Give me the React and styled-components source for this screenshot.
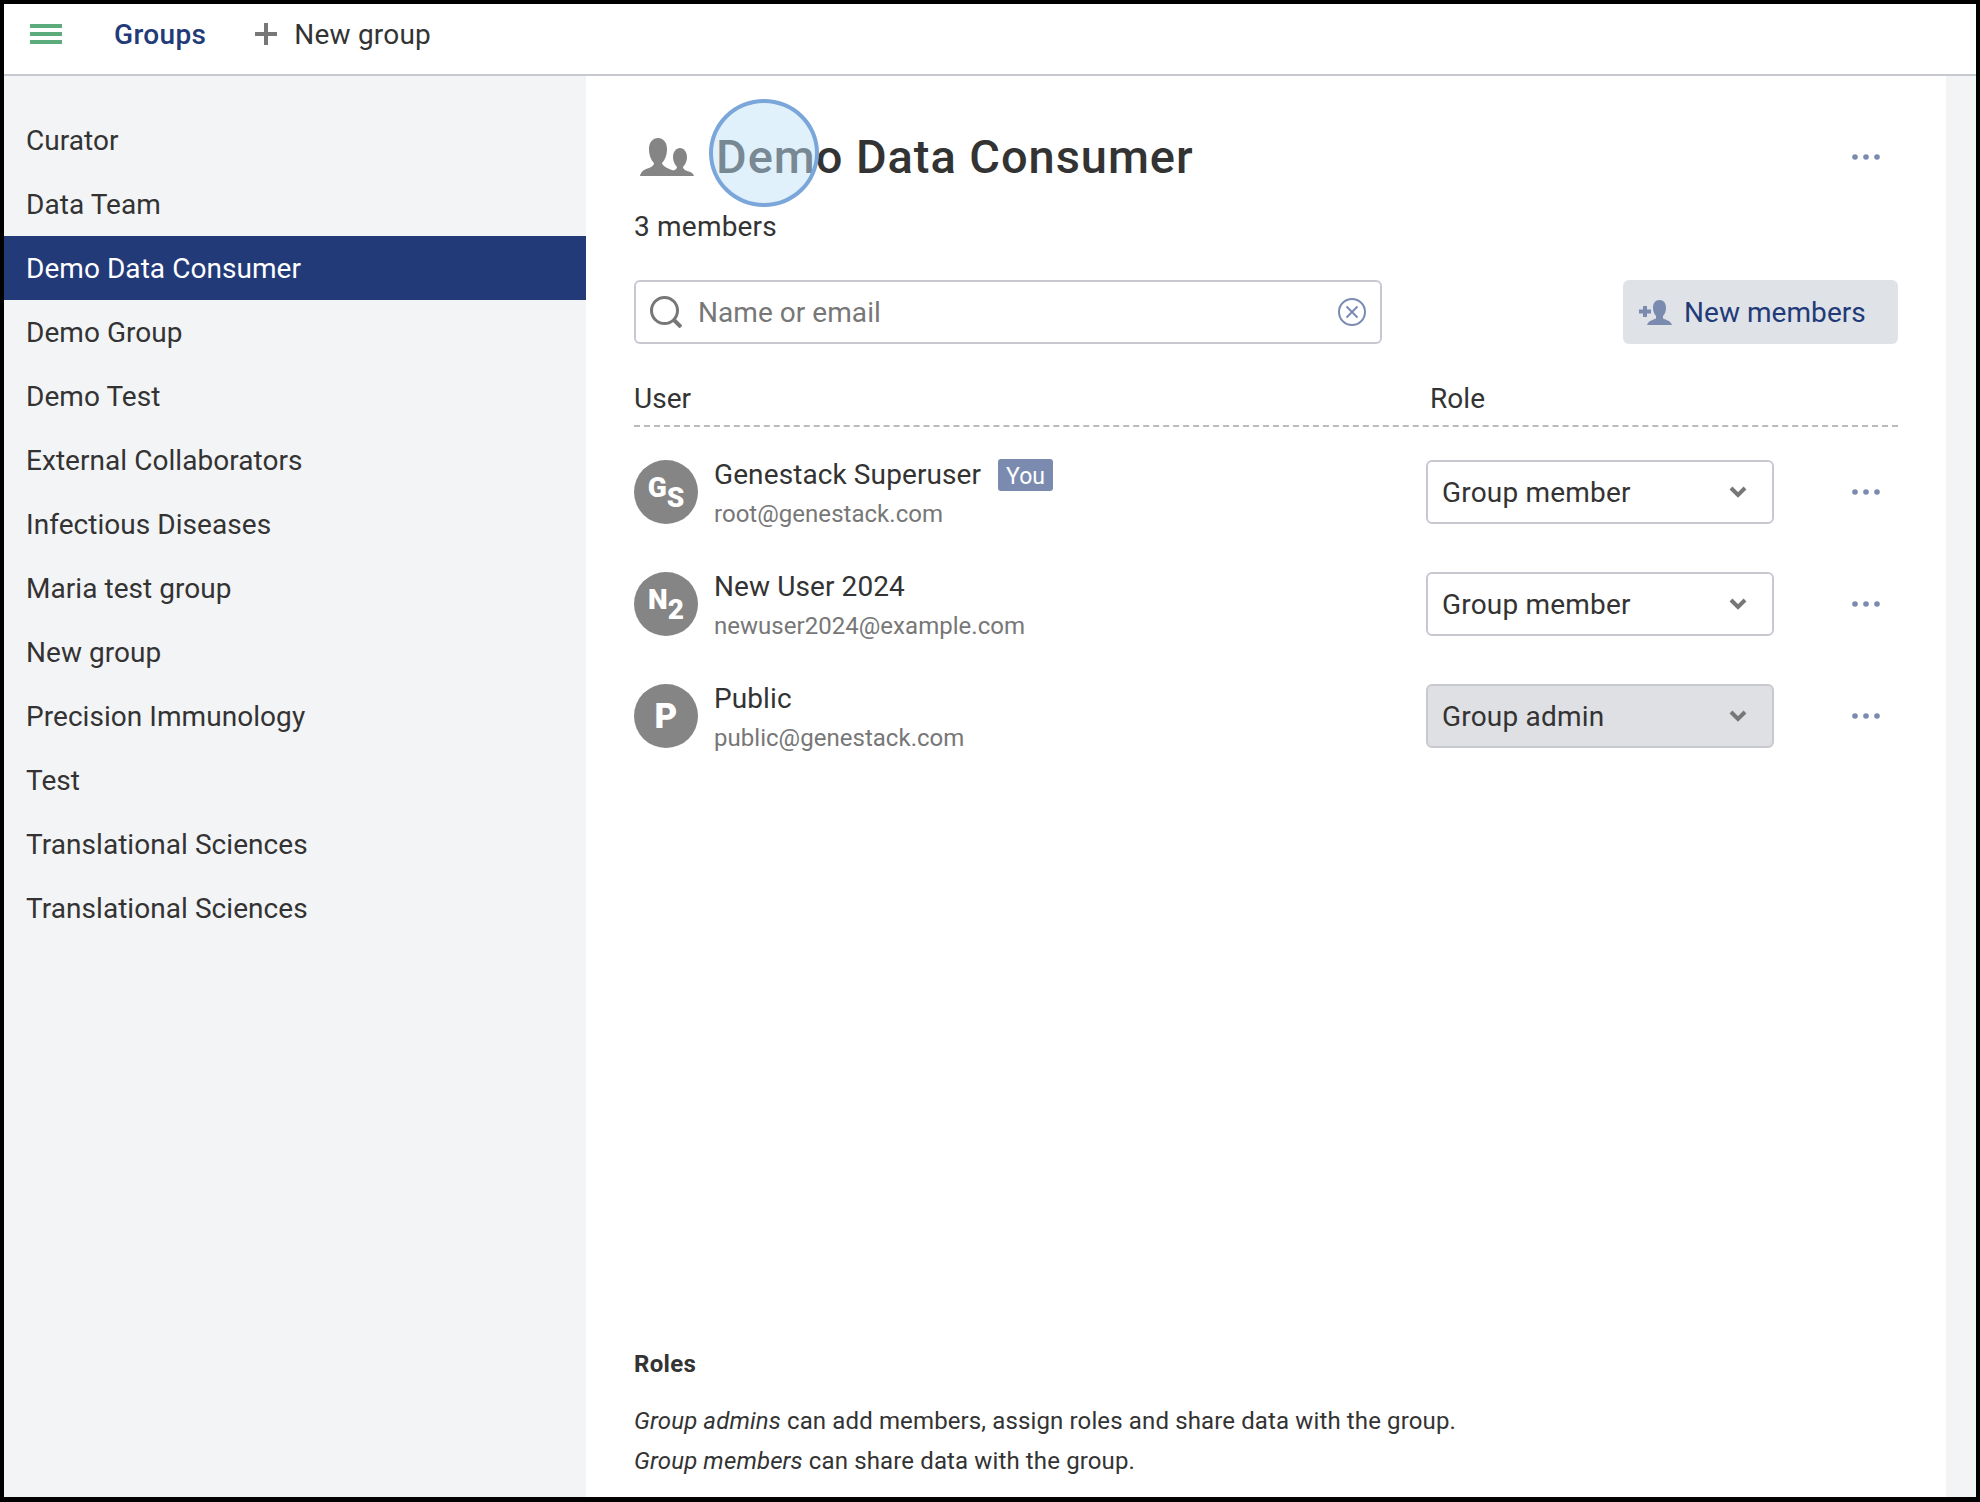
import React from 'react';
import styled, { createGlobalStyle } from 'styled-components';

const GlobalStyle = createGlobalStyle`
  html, body {
    margin: 0;
    padding: 0;
    background: #000;
  }
  * {
    box-sizing: border-box;
  }
`;

const Frame = styled.div`
  width: 1980px;
  height: 1502px;
  padding: 4px 4px 5px 4px;
  background: #000;
  font-family: Roboto, "Noto Sans", sans-serif;
  font-size: 28px;
  letter-spacing: 0.05px;
  font-variant-numeric: slashed-zero;
  color: #333;
  display: flex;
  flex-direction: column;
  overflow: hidden;
`;

const TopBar = styled.header`
  height: 72px;
  flex: none;
  background: #fff;
  border-bottom: 2px solid #c8c9d0;
  display: flex;
  align-items: center;
  padding: 0 0 10px 26px;
`;

const Burger = styled.div`
  width: 32px;
  height: 20px;
  display: flex;
  flex-direction: column;
  justify-content: space-between;
  margin-right: 52px;

  span {
    height: 4px;
    background: #5cab7d;
  }
`;

const Crumb = styled.span`
  color: #223a78;
  font-weight: 500;
  letter-spacing: 0.35px;
  margin-right: 48px;
`;

const NewGroup = styled.span`
  display: flex;
  align-items: center;
  gap: 16px;
  letter-spacing: 0.2px;
`;

const Body = styled.div`
  flex: 1;
  min-height: 0;
  display: flex;
  background: #f3f4f6;
  padding-right: 30px;
`;

const Sidebar = styled.nav`
  width: 582px;
  flex: none;
  padding-top: 32px;
`;

const GroupItem = styled.div`
  height: 64px;
  line-height: 66px;
  padding-left: 22px;
  background: ${(p) => (p.$active ? '#223a78' : 'transparent')};
  color: ${(p) => (p.$active ? '#fff' : '#333')};
`;

const Main = styled.main`
  flex: 1;
  position: relative;
  background: #fff;
  padding: 49px 48px 16px 48px;
  display: flex;
  flex-direction: column;
`;

const TitleRow = styled.div`
  height: 64px;
  display: flex;
  align-items: center;
  padding-left: 6px;
`;

const Title = styled.h1`
  margin: 0 0 0 22px;
  padding-bottom: 2px;
  flex: 1;
  font-size: 47px;
  font-weight: 500;
  letter-spacing: 0.95px;
  color: #333;
`;

const MembersCount = styled.div`
  height: 32px;
  line-height: 32px;
  margin-top: 22px;
  letter-spacing: 0.2px;
`;

const ClickMark = styled.div`
  position: absolute;
  left: 123px;
  top: 23px;
  width: 110px;
  height: 108px;
  border-radius: 50%;
  border: 4px solid #7ba6d9;
  background: rgba(192, 226, 249, 0.49);
`;

const ToolRow = styled.div`
  display: flex;
  justify-content: space-between;
  margin-top: 37px;
`;

const SearchBox = styled.div`
  width: 748px;
  height: 64px;
  border: 2px solid #c8c9d0;
  border-radius: 6px;
  display: flex;
  align-items: center;
  padding: 0 14px 0 14px;
  color: #777;
`;

const Placeholder = styled.span`
  flex: 1;
  margin-left: 16px;
`;

const AddButton = styled.div`
  width: 275px;
  height: 64px;
  background: #dfe2e7;
  border-radius: 6px;
  display: flex;
  align-items: center;
  gap: 12px;
  padding-left: 16px;
  color: #223a78;
`;

const MemberGrid = styled.div`
  display: grid;
  grid-template-columns: 1fr 348px 124px;
  align-items: center;
`;

const TableHead = styled(MemberGrid)`
  height: 83px;
  padding-top: 28px;
  border-bottom: 2px dashed #bbb;
  margin-bottom: 33px;
`;

const HeadLabel = styled.span`
  line-height: 40px;
  padding-left: ${(p) => p.$inset || 0}px;
`;

const MemberRow = styled(MemberGrid)`
  height: 64px;
  grid-template-rows: 64px;
  margin-bottom: 48px;
`;

const UserCell = styled.div`
  display: flex;
  align-items: center;
  gap: 16px;
  height: 64px;
`;

const Avatar = styled.div`
  width: 64px;
  height: 64px;
  flex: none;
  border-radius: 50%;
  background: #858585;
  color: #fff;
  font-weight: 900;
  display: flex;
  align-items: center;
  justify-content: center;
  letter-spacing: 0;
`;

const Initial = styled.span`
  font-size: ${(p) => (p.$single ? 35 : 28)}px;
  line-height: 1;
  margin-top: ${(p) => (p.$single ? 0 : p.$low ? 12 : -8)}px;
`;

const UserText = styled.div`
  padding-top: 4px;
`;

const NameLine = styled.div`
  display: flex;
  align-items: center;
  gap: 17px;
  height: 32px;
  line-height: 32px;
  letter-spacing: 0.1px;
`;

const YouBadge = styled.span`
  background: #7b8bb0;
  color: #fff;
  border-radius: 3px;
  font-size: 23px;
  height: 32px;
  line-height: 35px;
  padding: 0 8px;
  letter-spacing: 0;
`;

const Email = styled.div`
  color: #777;
  font-size: 24px;
  line-height: 32px;
  letter-spacing: 0.03px;
  margin-top: 7px;
`;

const RoleSelect = styled.div`
  height: 64px;
  border: 2px solid #c8c9d0;
  border-radius: 6px;
  background: ${(p) => (p.$filled ? '#dfe0e4' : '#fff')};
  display: flex;
  align-items: center;
  justify-content: space-between;
  padding: 0 25px 0 14px;
  letter-spacing: 0.2px;
`;

const MoreCell = styled.div`
  display: flex;
  justify-content: flex-end;
  padding-right: 18px;
`;

const TitleMore = styled(MoreCell)`
  flex: none;
`;

const RolesNote = styled.div`
  margin-top: auto;
  font-size: 24px;
  line-height: 40px;
  letter-spacing: 0.13px;
`;

const RolesTitle = styled.div`
  font-weight: 700;
  letter-spacing: 0.3px;
  margin-bottom: 17px;
`;

const groups = [
  'Curator',
  'Data Team',
  'Demo Data Consumer',
  'Demo Group',
  'Demo Test',
  'External Collaborators',
  'Infectious Diseases',
  'Maria test group',
  'New group',
  'Precision Immunology',
  'Test',
  'Translational Sciences',
  'Translational Sciences',
];

const members = [
  { name: 'Genestack Superuser', email: 'root@genestack.com', role: 'Group member', initials: ['G', 'S'], you: true },
  { name: 'New User 2024', email: 'newuser2024@example.com', role: 'Group member', initials: ['N', '2'] },
  { name: 'Public', email: 'public@genestack.com', role: 'Group admin', initials: ['P'], filled: true },
];

const Dots = () => (
  <svg width="28" height="6" viewBox="0 0 28 6">
    <circle cx="3" cy="3" r="2.8" fill="#7b8bb0" />
    <circle cx="14" cy="3" r="2.8" fill="#7b8bb0" />
    <circle cx="25" cy="3" r="2.8" fill="#7b8bb0" />
  </svg>
);

const PlusIcon = () => (
  <svg width="24" height="24" viewBox="0 0 24 24">
    <path d="M12 1v22M1 12h22" stroke="#777" strokeWidth="4" />
  </svg>
);

const GroupIcon = () => (
  <svg width="54" height="38" viewBox="0 0 54 38">
    <path fill="#858585" d="M0 38C1 33 5 31 9 30C12 29 14 27 14 25C11 22 9 17 9 11C9 4 13 0 18 0S27 4 27 11C27 17 25 22 22 25C22 27 26 30 32 32L36 34V38z" />
    <path fill="#858585" d="M32 33C35 32 37 31 37 29C34 26 33 22 33 19C33 14 36 10 40 10S47 14 47 19C47 22 46 26 43 29C43 31 45 32 47 33C51 34 53 35 54 38H30z" />
  </svg>
);

const SearchIcon = () => (
  <svg width="32" height="32" viewBox="0 0 32 32" fill="none" stroke="#777" strokeWidth="3">
    <circle cx="14.5" cy="14.5" r="13" />
    <path d="M23.5 23.5l7.5 7.5" strokeWidth="4" />
  </svg>
);

const ClearIcon = () => (
  <svg width="28" height="28" viewBox="0 0 28 28" fill="none" stroke="#7b8bb0" strokeWidth="2">
    <circle cx="14" cy="14" r="13" />
    <path d="M8.5 8.5l11 11M19.5 8.5l-11 11" />
  </svg>
);

const AddUserIcon = () => (
  <svg width="33" height="25" viewBox="0 0 33 25">
    <path fill="#7b8bb0" d="M4 6h4v3.5h4v4H8V17H4v-3.5H0v-4h4z" />
    <path fill="#7b8bb0" d="M8 25c1-4 6-5 9-6.5V16c-2-2-3-5-3-8.5C14 3 16.5 0 20.5 0S27 3 27 7.5c0 3.5-1 6.5-3 8.5v2.5c3 1.5 8 2.5 9 6.5z" />
  </svg>
);

const Chevron = () => (
  <svg width="18" height="12" viewBox="0 0 18 12" fill="none" stroke="#777" strokeWidth="4">
    <path d="M2 2l7 7 7-7" />
  </svg>
);

const App = () => (
  <Frame>
    <GlobalStyle />
    <TopBar>
      <Burger>
        <span />
        <span />
        <span />
      </Burger>
      <Crumb>Groups</Crumb>
      <NewGroup>
        <PlusIcon />
        New group
      </NewGroup>
    </TopBar>
    <Body>
      <Sidebar>
        {groups.map((g, i) => (
          <GroupItem key={i} $active={g === 'Demo Data Consumer'}>
            {g}
          </GroupItem>
        ))}
      </Sidebar>
      <Main>
        <TitleRow>
          <GroupIcon />
          <Title>Demo Data Consumer</Title>
          <TitleMore>
            <Dots />
          </TitleMore>
        </TitleRow>
        <MembersCount>3 members</MembersCount>
        <ToolRow>
          <SearchBox>
            <SearchIcon />
            <Placeholder>Name or email</Placeholder>
            <ClearIcon />
          </SearchBox>
          <AddButton>
            <AddUserIcon />
            New members
          </AddButton>
        </ToolRow>
        <TableHead>
          <HeadLabel>User</HeadLabel>
          <HeadLabel $inset={4}>Role</HeadLabel>
          <span />
        </TableHead>
        {members.map((m) => (
          <MemberRow key={m.email}>
            <UserCell>
              <Avatar>
                {m.initials.map((c, i) => (
                  <Initial key={c} $single={m.initials.length === 1} $low={i === 1}>
                    {c}
                  </Initial>
                ))}
              </Avatar>
              <UserText>
                <NameLine>
                  {m.name}
                  {m.you && <YouBadge>You</YouBadge>}
                </NameLine>
                <Email>{m.email}</Email>
              </UserText>
            </UserCell>
            <RoleSelect $filled={m.filled}>
              {m.role}
              <Chevron />
            </RoleSelect>
            <MoreCell>
              <Dots />
            </MoreCell>
          </MemberRow>
        ))}
        <RolesNote>
          <RolesTitle>Roles</RolesTitle>
          <div>
            <em>Group admins</em> can add members, assign roles and share data with the group.
          </div>
          <div>
            <em>Group members</em> can share data with the group.
          </div>
        </RolesNote>
        <ClickMark />
      </Main>
    </Body>
  </Frame>
);

export default App;
